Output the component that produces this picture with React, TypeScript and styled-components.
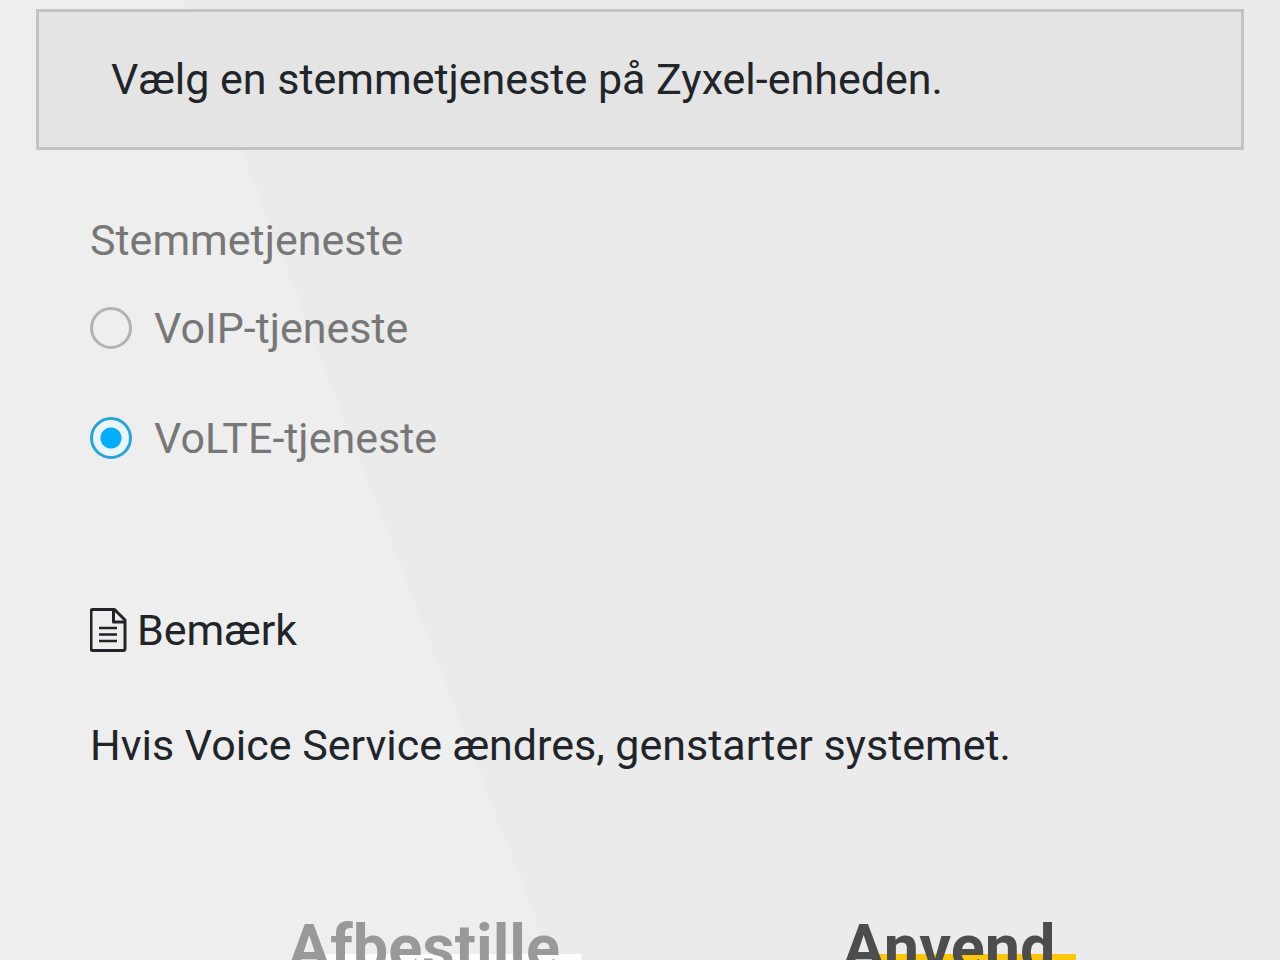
import React, { useState } from "react";
import styled, { createGlobalStyle } from "styled-components";

const GlobalStyle = createGlobalStyle`
  *, *::before, *::after { box-sizing: border-box; }
  body {
    margin: 0;
    background: linear-gradient(69deg, #eeeeee 512px, #ebebeb 518px) fixed;
    font-family: Roboto, "Noto Sans", sans-serif;
    font-size: 43px;
    line-height: 56px;
    color: #212529;
  }
`;

const Page = styled.main`
  padding: 9px 36px 0;
`;

const Banner = styled.p`
  margin: 0;
  padding: 39px 72px 40px;
  border: 3px solid #c3c3c3;
  background: #e4e4e4;
`;

const Form = styled.form`
  padding: 0 54px;
`;

const ServiceGroup = styled.fieldset`
  display: flex;
  flex-direction: column;
  margin: 0;
  padding: 62px 0 0;
  border: 0;
  color: #777777;
`;

const GroupTitle = styled.legend`
  float: left;
  padding: 0;
  margin-bottom: 32px;
`;

const Option = styled.label`
  display: flex;
  align-items: center;
  gap: 22px;
  margin-bottom: 54px;
`;

const Radio = styled.input`
  appearance: none;
  flex: none;
  width: 42px;
  height: 42px;
  margin: 0;
  border: 3px solid #b2b2b2;
  border-radius: 50%;

  &:checked {
    border-color: #26a4dc;
    background: radial-gradient(circle, #00adff 10px, #e9f5fb 11px);
  }
`;

const NoteTitle = styled.h2`
  display: flex;
  align-items: center;
  gap: 10px;
  margin: 82px 0 59px;
  font-size: 43px;
  font-weight: 400;
`;

const NoteText = styled.p`
  margin: 0;
`;

const Actions = styled.div`
  display: grid;
  grid-template-columns: 1fr 1fr;
  column-gap: 43px;
  justify-items: center;
  padding: 137px 0 40px 93px;
`;

const ActionButton = styled.button<{ $text: string; $bar: string }>`
  position: relative;
  z-index: 0;
  padding: 0;
  border: 0;
  background: none;
  font: 700 63px/76px Roboto, "Noto Sans", sans-serif;
  color: ${(p) => p.$text};
  cursor: pointer;

  &::after {
    content: "";
    position: absolute;
    z-index: -1;
    top: 44px;
    left: 34px;
    right: -21px;
    height: 18px;
    background: ${(p) => p.$bar};
  }
`;

const NoteIcon = () => (
  <svg width="37" height="44" viewBox="0 0 37 44" fill="none" stroke="#212529" aria-hidden="true">
    <path d="M3 1.5H24.5L35 12V40.5Q35 42.5 33 42.5H3Q1 42.5 1 40.5V3.5Q1 1.5 3 1.5Z" strokeWidth="3" strokeLinejoin="round" />
    <path d="M23.5 2V14H35" strokeWidth="3" strokeLinejoin="round" />
    <path d="M9 20H27M9 26.5H27M9 33H27" strokeWidth="2.6" />
  </svg>
);

const services = [
  { value: "voip", label: "VoIP-tjeneste" },
  { value: "volte", label: "VoLTE-tjeneste" },
];

export default function App() {
  const [service, setService] = useState("volte");
  return (
    <>
      <GlobalStyle />
      <Page>
        <Banner>Vælg en stemmetjeneste på Zyxel-enheden.</Banner>
        <Form onSubmit={(e) => e.preventDefault()}>
          <ServiceGroup>
            <GroupTitle>Stemmetjeneste</GroupTitle>
            {services.map((s) => (
              <Option key={s.value}>
                <Radio
                  type="radio"
                  name="service"
                  value={s.value}
                  checked={service === s.value}
                  onChange={() => setService(s.value)}
                />
                {s.label}
              </Option>
            ))}
          </ServiceGroup>
          <NoteTitle>
            <NoteIcon />
            Bemærk
          </NoteTitle>
          <NoteText>Hvis Voice Service ændres, genstarter systemet.</NoteText>
          <Actions>
            <ActionButton type="button" $text="#999999" $bar="#ffffff">
              Afbestille
            </ActionButton>
            <ActionButton type="submit" $text="#4d4d4d" $bar="#fdc60a">
              Anvend
            </ActionButton>
          </Actions>
        </Form>
      </Page>
    </>
  );
}
